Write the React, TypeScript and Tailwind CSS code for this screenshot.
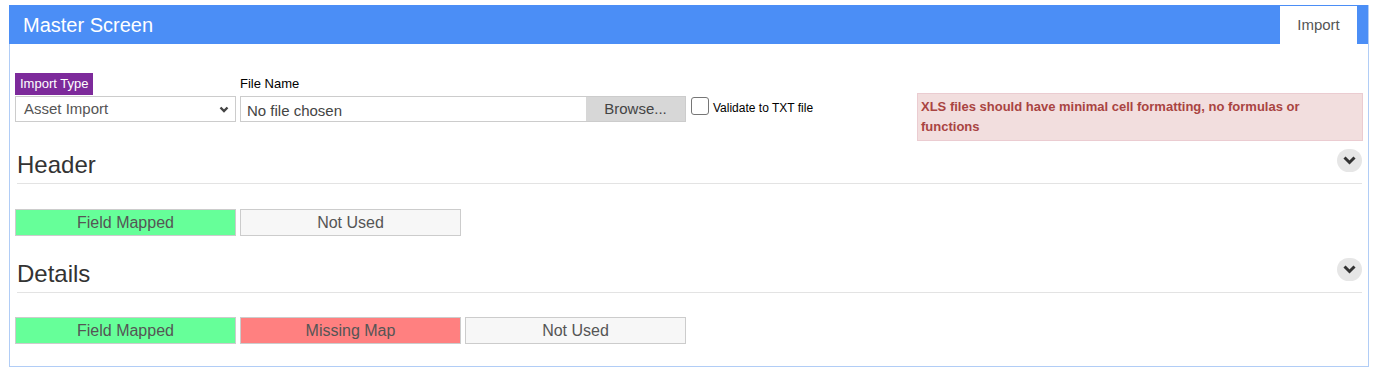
import React from 'react';

const font = { fontFamily: '"Liberation Sans", Arial, sans-serif' };

const Chevron: React.FC = () => (
  <div className="absolute right-0 top-[-2px] flex h-[23px] w-[25px] items-center justify-center rounded-full bg-[#e6e6e6]">
    <svg width="13" height="9" viewBox="0 0 13 9">
      <polyline points="1.5,1.5 6.5,6.5 11.5,1.5" fill="none" stroke="#333" strokeWidth="3" />
    </svg>
  </div>
);

const SectionTitle: React.FC<{ title: string }> = ({ title }) => (
  <div className="relative ml-[7px] mr-[6px] border-b border-[#e3e3e3] pb-[4px]">
    <h2 className="text-[24px] leading-[28px] text-[#333]">{title}</h2>
    <Chevron />
  </div>
);

const tagStyles: Record<string, string> = {
  mapped: 'bg-[#66ff99]',
  missing: 'bg-[#ff8080]',
  unused: 'bg-[#f7f7f7]',
};

const Tag: React.FC<{ label: string; kind: string }> = ({ label, kind }) => (
  <div
    className={`flex h-[27px] w-[221px] items-center justify-center border border-[#cccccc] text-[16px] text-[#555] ${tagStyles[kind]}`}
  >
    {label}
  </div>
);

export default function App() {
  return (
    <div className="min-h-[377px] bg-white pt-[5px] pl-[9px]" style={font}>
      <div className="w-[1360px] border-x border-b border-[#b1cdf6]">
        {/* title bar */}
        <div className="-ml-px flex h-[39px] items-stretch bg-[#4b8ef6]">
          <div className="flex items-center pl-[14px] text-[20px] text-white">Master Screen</div>
          <div className="mr-[11px] ml-auto mt-px flex w-[77px] items-center justify-center bg-white text-[15px] text-[#555]">
            Import
          </div>
        </div>

        <div className="pt-[29px] pb-[22px]">
          {/* import row */}
          <div className="flex items-start pl-[5px] pr-[5px]">
            <div className="flex flex-col">
              <div className="h-[22px] w-[78px] whitespace-nowrap bg-[#7d2a9b] px-[5px] text-[13px] leading-[22px] text-white">
                Import Type
              </div>
              <div className="relative mt-px flex h-[26px] w-[221px] items-center border border-[#cccccc] pl-[8px] text-[15px] text-[#555]">
                Asset Import
                <svg className="absolute right-[6px] top-[9px]" width="10" height="7" viewBox="0 0 10 7">
                  <polyline points="1.5,1.5 5,5 8.5,1.5" fill="none" stroke="#444" strokeWidth="2.4" />
                </svg>
              </div>
            </div>

            <div className="ml-[4px] flex flex-col">
              <div className="h-[22px] text-[13px] leading-[22px] text-black">File Name</div>
              <div className="mt-px flex h-[26px] w-[446px] items-stretch border border-[#cccccc]">
                <span className="flex-1 pl-[6px] pt-[5px] text-[15px] leading-[18px] text-[#444]">No file chosen</span>
                <span className="flex w-[99px] items-center justify-center bg-[#d7d7d7] text-[15px] text-[#444]">
                  Browse...
                </span>
              </div>
            </div>

            <label className="ml-[5px] mt-[24px] flex items-end gap-[4px] text-[12px] text-black">
              <span className="h-[18px] w-[18px] rounded-[3px] border border-[#767676] bg-white" />
              <span className="leading-[14px]">Validate to TXT file</span>
            </label>

            <div className="ml-auto mt-[20px] w-[446px] border border-[#ebccd1] bg-[#f2dede] px-[3px] py-[3px] text-[13px] font-bold leading-[20px] text-[#a94442]">
              XLS files should have minimal cell formatting, no formulas or functions
            </div>
          </div>

          {/* header section */}
          <div className="mt-[10px]">
            <SectionTitle title="Header" />
            <div className="mt-[25px] flex gap-[4px] pl-[5px]">
              <Tag label="Field Mapped" kind="mapped" />
              <Tag label="Not Used" kind="unused" />
            </div>
          </div>

          {/* details section */}
          <div className="mt-[24px]">
            <SectionTitle title="Details" />
            <div className="mt-[24px] flex gap-[4px] pl-[5px]">
              <Tag label="Field Mapped" kind="mapped" />
              <Tag label="Missing Map" kind="missing" />
              <Tag label="Not Used" kind="unused" />
            </div>
          </div>
        </div>
      </div>
    </div>
  );
}
